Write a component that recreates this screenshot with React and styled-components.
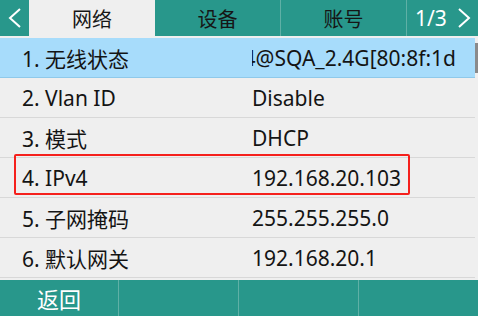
import React from 'react';
import styled, { createGlobalStyle } from 'styled-components';

const Global = createGlobalStyle`
  html, body {
    margin: 0;
    padding: 0;
    background: #efefef;
  }
  body {
    font-family: "Noto Sans", "Noto Sans CJK SC", sans-serif;
  }
`;

const Screen = styled.div`
  width: 478px;
  height: 316px;
  display: flex;
  flex-direction: column;
  background: #efefef;
  overflow: hidden;
`;

const Header = styled.div`
  height: 36px;
  display: flex;
  background: #28978b;
  flex-shrink: 0;
`;

const ArrowTile = styled.div`
  width: ${(p) => p.w}px;
  display: flex;
  align-items: center;
  justify-content: center;
  color: #fff;
  svg {
    width: 13px;
    height: 20px;
  }
`;

const Tab = styled.div`
  width: ${(p) => p.w}px;
  display: flex;
  align-items: center;
  justify-content: center;
  font-size: 20px;
  color: #161616;
  background: ${(p) => (p.active ? '#efefef' : 'transparent')};
  border-left: ${(p) => (p.divider ? '1px solid #5fb0a6' : 'none')};
  box-sizing: border-box;
`;

const Pager = styled.div`
  flex: 1;
  display: flex;
  align-items: center;
  padding-left: 8px;
  gap: 11px;
  color: #fff;
  font-size: 21px;
  border-left: 1px solid #5fb0a6;
  svg {
    width: 13px;
    height: 20px;
  }
`;

const Body = styled.div`
  display: flex;
  margin-top: 2px;
  height: 240px;
`;

const List = styled.div`
  flex: 1;
  display: flex;
  flex-direction: column;
`;

const Row = styled.div`
  position: relative;
  height: 39px;
  border-bottom: 1px solid ${(p) => (p.selected ? '#8fc9ea' : '#d8d8d8')};
  background: ${(p) => (p.selected ? '#a7dcfb' : 'transparent')};
  display: flex;
  align-items: center;
  font-size: 21px;
  color: #141414;
`;

const Label = styled.div`
  width: 230px;
  padding-left: 22px;
  white-space: nowrap;
`;

const Value = styled.div`
  width: 204px;
  display: flex;
  justify-content: ${(p) => (p.scrolled ? 'flex-end' : 'flex-start')};
  overflow: hidden;
  white-space: nowrap;
`;

const Mark = styled.div`
  position: absolute;
  left: 14px;
  top: -4px;
  width: 396px;
  height: 41px;
  border: 2px solid #f5201c;
  border-radius: 2px;
  box-sizing: border-box;
  pointer-events: none;
`;

const Track = styled.div`
  width: 3px;
  padding-top: 5px;
`;

const Thumb = styled.div`
  height: 30px;
  background: #8a8a8a;
`;

const Footer = styled.div`
  margin-top: 2px;
  height: 36px;
  display: flex;
  background: #28978b;
`;

const SoftKey = styled.div`
  width: ${(p) => p.w}px;
  display: flex;
  align-items: center;
  justify-content: center;
  color: #fff;
  font-size: 22px;
  border-left: ${(p) => (p.divider ? '1px solid #5fb0a6' : 'none')};
  box-sizing: border-box;
`;

const Chevron = ({ dir }) => (
  <svg viewBox="0 0 13 20" fill="none" stroke="currentColor" strokeWidth="2">
    {dir === 'left' ? <polyline points="12,1 2,10 12,19" /> : <polyline points="1,1 11,10 1,19" />}
  </svg>
);

const rows = [
  { label: '1. 无线状态', value: 'Yealink4@SQA_2.4G[80:8f:1d', selected: true },
  { label: '2. Vlan ID', value: 'Disable' },
  { label: '3. 模式', value: 'DHCP' },
  { label: '4. IPv4', value: '192.168.20.103', marked: true },
  { label: '5. 子网掩码', value: '255.255.255.0' },
  { label: '6. 默认网关', value: '192.168.20.1' },
];

export default function App() {
  return (
    <Screen>
      <Global />
      <Header>
        <ArrowTile w={29}>
          <Chevron dir="left" />
        </ArrowTile>
        <Tab w={126} active>网络</Tab>
        <Tab w={125}>设备</Tab>
        <Tab w={126} divider>账号</Tab>
        <Pager>
          <span>1/3</span>
          <Chevron dir="right" />
        </Pager>
      </Header>
      <Body>
        <List>
          {rows.map((r) => (
            <Row key={r.label} selected={r.selected}>
              <Label>{r.label}</Label>
              <Value scrolled={r.selected}>
                <span>{r.value}</span>
              </Value>
              {r.marked && <Mark />}
            </Row>
          ))}
        </List>
        <Track>
          <Thumb />
        </Track>
      </Body>
      <Footer>
        <SoftKey w={118}>返回</SoftKey>
        <SoftKey w={120} divider />
        <SoftKey w={120} divider />
        <SoftKey w={120} divider />
      </Footer>
    </Screen>
  );
}
